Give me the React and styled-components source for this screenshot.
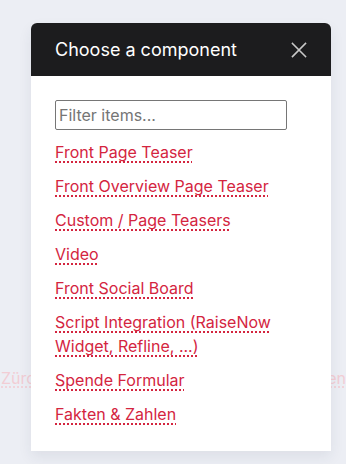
import { createGlobalStyle, styled } from 'styled-components'

const items = [
    'Front Page Teaser',
    'Front Overview Page Teaser',
    'Custom / Page Teasers',
    'Video',
    'Front Social Board',
    'Script Integration (RaiseNow Widget, Refline, ...)',
    'Spende Formular',
    'Fakten & Zahlen',
]

const App = () => {
    return (
        <Page>
            <GlobalStyle />
            <Backdrop>
                <Clip>
                    <BgLink>Zürcher Kantonalbank</BgLink>
                </Clip>
                <Clip $end>
                    <BgLink>Spenden</BgLink>
                </Clip>
            </Backdrop>
            <Modal>
                <Header>
                    <Title>Choose a component</Title>
                    <Close aria-label="Close">
                        <svg width="16" height="16" viewBox="0 0 16 16" fill="none" stroke="currentColor" strokeWidth="1.6" strokeLinecap="square">
                            <path d="M1.5 1.5l13 13M14.5 1.5l-13 13" />
                        </svg>
                    </Close>
                </Header>
                <Body>
                    <Filter placeholder="Filter items..." />
                    <List>
                        {items.map((item) => (
                            <Item key={item}>
                                <ItemLink href="#">{item}</ItemLink>
                            </Item>
                        ))}
                    </List>
                </Body>
            </Modal>
        </Page>
    )
}

export default App

const GlobalStyle = createGlobalStyle`
html, body {
    margin: 0;
    padding: 0;
    background: #eceef4;
    font-family: Inter, "Noto Sans", sans-serif;
}
`

const Page = styled.div`
position: relative;
width: 346px;
height: 464px;
overflow: hidden;
`

const Backdrop = styled.div`
display: flex;
justify-content: space-between;
padding-top: 366px;
padding-left: 1px;
`

const Clip = styled.div`
display: flex;
justify-content: ${(p) => (p.$end ? 'flex-end' : 'flex-start')};
width: ${(p) => (p.$end ? '15px' : '30px')};
overflow: hidden;
white-space: nowrap;
`

const BgLink = styled.span`
font-size: 16px;
line-height: 24px;
color: #f2cdd4;
text-decoration: underline dotted #f2cdd4;
text-underline-offset: 3px;
`

const Modal = styled.div`
position: absolute;
top: 23px;
left: 31px;
width: 300px;
background: #fff;
border-radius: 6px 6px 0 0;
box-shadow: 0 6px 14px rgba(40, 50, 80, 0.08);
`

const Header = styled.div`
display: flex;
align-items: center;
justify-content: space-between;
height: 53px;
padding: 0 24px;
background: #1c1c1e;
border-radius: 6px 6px 0 0;
`

const Title = styled.h2`
margin: 0;
font-size: 18px;
font-weight: 400;
color: #fff;
`

const Close = styled.button`
display: flex;
padding: 0;
border: 0;
background: transparent;
color: #c8c8c8;
cursor: pointer;
`

const Body = styled.div`
padding: 24px 24px 25px;
`

const Filter = styled.input`
box-sizing: border-box;
width: 232px;
height: 30px;
padding: 0 3px;
border: 1px solid #767676;
border-radius: 2px;
font-family: Inter, sans-serif;
font-size: 16px;
color: #222;

&::placeholder {
    color: #757575;
}
`

const List = styled.ul`
list-style: none;
margin: 10px 0 0;
padding: 0;
display: flex;
flex-direction: column;
gap: 10px;
`

const Item = styled.li`
font-size: 16px;
line-height: 24px;
`

const ItemLink = styled.a`
color: #d4253f;
text-decoration: underline dotted #d4253f;
text-decoration-thickness: 2px;
text-underline-offset: 3px;
`
